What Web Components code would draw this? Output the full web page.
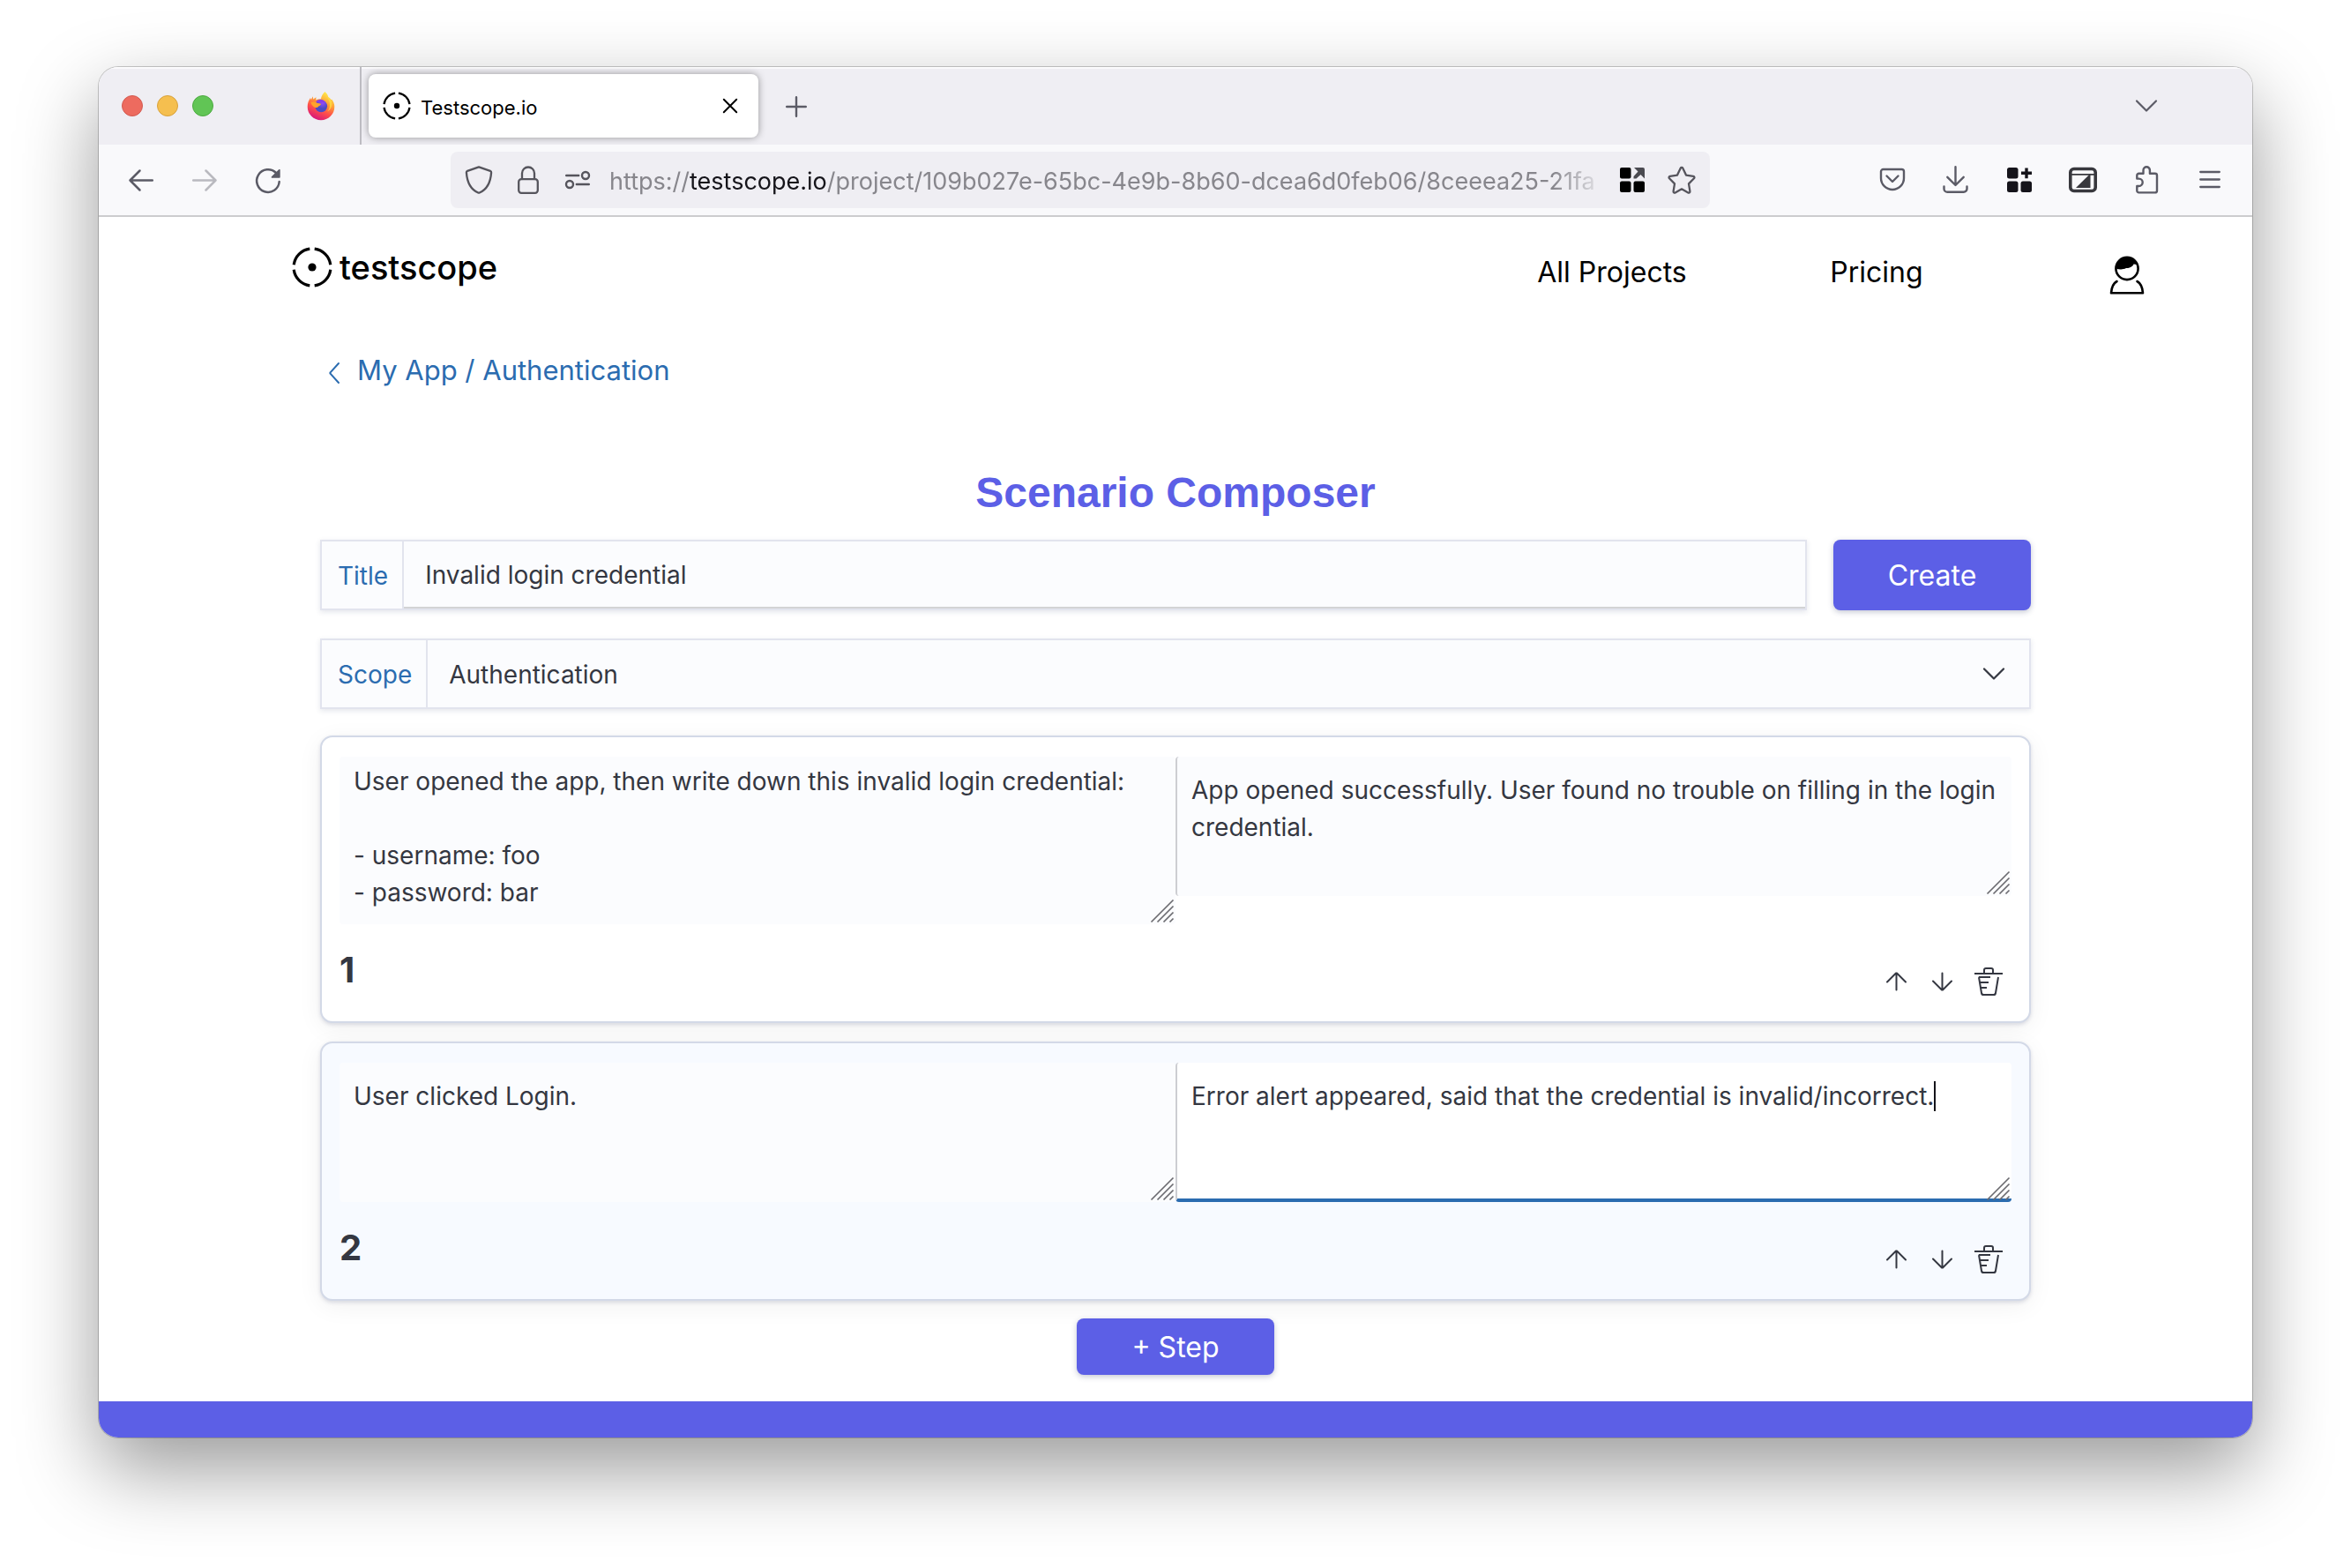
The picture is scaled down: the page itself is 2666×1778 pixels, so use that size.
<!DOCTYPE html>
<html lang="en">
<head>
<meta charset="utf-8">
<title>Testscope.io</title>
<style>
  body { margin: 0; padding: 76px 112px 148px; background: #fff; font-family: Inter, "Liberation Sans", sans-serif; font-size: 28px; line-height: 42px; color: #343741; }
</style>
</head>
<body>
<browser-window>
  <tab-strip slot="tabs" label="Testscope.io"></tab-strip>
  <nav-toolbar slot="toolbar"></nav-toolbar>
  <app-header></app-header>
  <scenario-composer>
    <step-card number="1">
      <step-text name="Action" tall>User opened the app, then write down this invalid login credential:

- username: foo
- password: bar</step-text>
      <step-text name="Expectation" divided>App opened successfully. User found no trouble on filling in the login credential.</step-text>
    </step-card>
    <step-card number="2" active>
      <step-text name="Action">User clicked Login.</step-text>
      <step-text name="Expectation" divided focused>Error alert appeared, said that the credential is invalid/incorrect.</step-text>
    </step-card>
  </scenario-composer>
</browser-window>

<script>
const reset = `
  :host, *, *::before, *::after { box-sizing: border-box; }
  button, input, select, textarea { font: inherit; color: inherit; margin: 0; padding: 0; border: 0; border-radius: 0; background: none; outline: 0; }
  button { cursor: pointer; display: flex; align-items: center; justify-content: center; }
  a { color: inherit; text-decoration: none; }
`;

function define(name, css, html, setup) {
  customElements.define(name, class extends HTMLElement {
    constructor() {
      super();
      this.attachShadow({ mode: 'open' });
    }
    connectedCallback() {
      if (this.shadowRoot.childNodes.length) return;
      const template = document.createElement('template');
      template.innerHTML = `<style>${reset}${css}</style>${typeof html === 'function' ? html(this) : html}`;
      this.shadowRoot.append(template.content.cloneNode(true));
      if (setup) setup(this);
    }
  });
}

/* Icon set: each entry is [viewBox width, viewBox height, markup] */
const line = 'fill="none" stroke="currentColor" stroke-linecap="round" stroke-linejoin="round"';
const icons = {
  target: [46, 46, `<g fill="none" stroke="currentColor" stroke-width="3.2"><path d="M20.3 2.2A21 21 0 0 0 2.2 20.3M25.7 2.2A21 21 0 0 1 43.8 20.3M43.8 25.7A21 21 0 0 1 25.7 43.8M20.3 43.8A21 21 0 0 1 2.2 25.7"/></g><circle cx="23" cy="23" r="4.6" fill="currentColor"/>`],
  close: [32, 32, `<path ${line} stroke-width="2" d="M8.8 8.8l14.4 14.4M23.2 8.8L8.8 23.2"/>`],
  plus: [32, 32, `<path ${line} stroke-width="2.4" d="M16 6.2v21.6M5.2 17h21.6"/>`],
  down: [32, 32, `<path ${line} stroke-width="2.2" d="M5 10.5l11 11 11-11"/>`],
  back: [32, 32, `<path ${line} stroke-width="2.5" d="M28.8 16.5H3.5M14.5 5.5L3.5 16.5l11 11"/>`],
  forward: [32, 32, `<path ${line} stroke-width="2.5" d="M3.2 16.5h25.3M17.5 5.5l11 11-11 11"/>`],
  reload: [32, 32, `<path ${line} stroke-width="2.5" d="M28.7 18A12.8 12.8 0 1 1 25 8"/><path fill="currentColor" d="M29.7 4.700v8.300a.8.8 0 0 1-.8.8H20.500a.9.9 0 0 1-.6-1.500L28.400 4.100a.8.8 0 0 1 1.300.6z"/>`],
  shield: [32, 32, `<path ${line} stroke-width="2.3" d="M16 1.3l13 4.6c.8.3 1.2.9 1.1 1.7C29.4 17.5 26 26.5 16.8 30.5c-.5.2-1.1.2-1.6 0C6 26.500 2.600 17.500 1.900 7.600c-.1-.8.3-1.400 1.100-1.700z"/>`],
  lock: [32, 32, `<g ${line} stroke-width="2.3"><rect x="5.2" y="15.2" width="21.6" height="15.6" rx="3"/><path d="M9 15V8.500a7 7 0 0 1 14 0V15"/></g>`],
  permissions: [32, 32, `<g ${line} stroke-width="2.4"><path d="M3.2 11h14M14.800 21h14"/><circle cx="25" cy="11" r="4"/><circle cx="7" cy="21" r="4"/></g>`],
  gridOpen: [32, 32, `<g fill="#000"><rect x="2" y="2" width="12.5" height="12.5" rx="2"/><rect x="2" y="17.5" width="12.5" height="12.5" rx="2"/><rect x="17.5" y="17.5" width="12.5" height="12.5" rx="2"/></g><path fill="#4a4a50" d="M18 2h10a2 2 0 0 1 2 2v10.500l-4.500-4.500-5 4.500H17.500v-2.500l5-5.500z"/>`],
  star: [32, 32, `<path ${line} stroke-width="2.3" d="M14.7 2.800c.5-1.100 2.100-1.100 2.600 0l3.700 7.800 8.200 1.200c1.200.2 1.700 1.600.8 2.500l-6 6.100 1.400 8.500c.2 1.200-1 2.100-2.100 1.500L16 26.300l-7.300 4.100c-1.100.6-2.300-.3-2.100-1.500L8 20.400l-6-6.100c-.9-.9-.4-2.300.8-2.500l8.200-1.200z"/>`],
  pocket: [32, 32, `<g ${line} stroke-width="2.4"><path d="M5.500 4h21A2.500 2.500 0 0 1 29 6.500V14a13 13 0 0 1-26 0V6.500A2.500 2.500 0 0 1 5.500 4z"/><path d="M9.500 11.500l6.500 6.500 6.500-6.500"/></g>`],
  download: [32, 32, `<g ${line} stroke-width="2.4"><path d="M15.500 1.200v20.300M6.300 12.800l9.200 9.200 9.200-9.200M2.500 23.500V26a3.800 3.800 0 0 0 3.800 3.800h18.400A3.800 3.800 0 0 0 28.500 26v-2.500"/></g>`],
  gridPlus: [32, 32, `<g fill="#15141a"><rect x="2" y="2" width="12.5" height="12.5" rx="2.5"/><rect x="2" y="17.5" width="12.5" height="12.5" rx="2.5"/><rect x="17.5" y="17.5" width="12.5" height="12.5" rx="2.5"/><path d="M22.300 2.500h3.400v4h4.300v3.500h-4.300v4.200h-3.400v-4.200H18V6.500h4.300z"/></g>`],
  reader: [32, 32, `<g stroke="#38383d" fill="none"><rect x="1.8" y="3.500" width="28.400" height="25" rx="4" stroke-width="3.600"/><path d="M3 9.800h26" stroke-width="1.800"/></g><path fill="#38383d" d="M8 25h16.500V8.800z"/>`],
  puzzle: [32, 32, `<path ${line} stroke-width="2.4" d="M12.500 8.800V4.900a3.700 3.700 0 0 1 7.400 0v3.900h5.900A2.200 2.200 0 0 1 28 11v17.200a2.200 2.200 0 0 1-2.200 2.200H7.500a2.200 2.200 0 0 1-2.200-2.200V23h2.200a4.200 4.200 0 0 0 0-8.400H5.300V11a2.200 2.200 0 0 1 2.200-2.200z"/>`],
  menu: [32, 32, `<path ${line} stroke-width="2.3" d="M5.200 7h21.600M5.200 15.500h21.600M5.200 24h21.600"/>`],
  user: [40, 44, `<g ${line} stroke="#000" stroke-width="2.6"><path d="M8.500 29C5 31 2.500 35.500 2 42.300h36C37.500 35.500 35 31 31.500 29"/><circle cx="20" cy="14.500" r="12.600"/></g><path fill="#000" d="M7.400 14.500A12.600 12.600 0 0 1 31.500 9.500c-1.500.4-2.700.3-3.700-.3-1.300 3.200-5 5-8.800 4.800-4 2-8 1.500-11.600.5z"/>`],
  left: [12, 24, `<path ${line} stroke-width="2" d="M11 1L1.600 11.300a1 1 0 0 0 0 1.400L11 23"/>`],
  up: [32, 32, `<path ${line} stroke-width="2" d="M15.500 25.500V6.500M5 16.500l10-10h1l10 10"/>`],
  descend: [32, 32, `<path ${line} stroke-width="2" d="M15.500 6.500v19M5 15.500l10 10h1l10-10"/>`],
  trash: [32, 32, `<g fill="none" stroke="currentColor" stroke-width="2"><path d="M0 7h32M11 7V3a2 2 0 0 1 2-2h6a2 2 0 0 1 2 2v4M5 11l3 18a2.300 2.300 0 0 0 2.300 2h11.400a2.300 2.300 0 0 0 2.300-2l3-18M4.800 11H18M6.500 17H16M7.500 23H14"/></g>`],
  grip: [26, 26, `<path fill="none" stroke="#6b6b70" stroke-width="1.7" d="M.5 25.500l25-25M7.500 25.500l18-18M14.500 25.500l11-11M21.500 25.500l4-4"/>`],
  firefox: [32, 32, `<defs><linearGradient id="f" x1=".75" y1="0" x2=".3" y2="1"><stop offset="0" stop-color="#fff44f"/><stop offset=".35" stop-color="#ffa436"/><stop offset=".65" stop-color="#ff4f4a"/><stop offset="1" stop-color="#d4117f"/></linearGradient><radialGradient id="p" cx=".6" cy=".2"><stop offset="0" stop-color="#9d4bff"/><stop offset="1" stop-color="#4a4bc4"/></radialGradient></defs><path fill="url(#f)" d="M20.500 0c2 1.800 3.300 3.800 3.900 6.200 1.400.7 2.400 1.800 2.900 2.800l1-.3C30.400 11.200 31.300 14 31.300 17A15.300 15.300 0 0 1 .7 17c0-4 1.300-7.300 3.300-10l.8 2L6.800 5.200l.4 3.200 3.300-2.200-.2 3.200c2-1 4.200-1.200 5.600-.9.400-3.500 2.200-6.500 4.600-8.500z"/><circle cx="16.200" cy="16.300" r="6.900" fill="url(#p)"/><path fill="#8a3fe8" d="M10 11.500c2.500-3.500 8-4 11 .3l-4 .7z"/><path fill="#ffa32b" d="M4.500 12c3-1.200 5.500-.4 7 .8 1.500.6 3.600.2 4.600 1.200-.5 1.800-3 2.200-3.700 3.400-1.600 1.200-4.500.6-5.200-.9-1.200-1-2.200-2.300-2.700-4.500z"/><path fill="#ffdf43" opacity=".75" d="M21 1.500c.7 4.500 4.500 6.500 5 12.500.3 4-1 6.500-3 8.500 6-2.500 7-10.500 3-14.500-2-2-4-3.500-5-6.500z"/>`]
};

define('ui-icon', `
  :host { display: block; flex: none; }
  svg { display: block; width: 100%; height: 100%; overflow: visible; }
`, el => {
  const [w, h, body] = icons[el.getAttribute('name')];
  el.style.width = (el.getAttribute('size') || w) + 'px';
  el.style.height = (el.getAttribute('size') || h) + 'px';
  return `<svg viewBox="0 0 ${w} ${h}" aria-hidden="true">${body}</svg>`;
});

define('browser-window', `
  :host { display: flex; flex-direction: column; overflow: hidden; border-radius: 22px; background: #fff; box-shadow: 0 0 0 1px rgba(0,0,0,.2), 0 36px 90px rgba(0,0,0,.4); }
  footer { height: 41px; background: #5c5fe6; }
`, `<slot name="tabs"></slot><slot name="toolbar"></slot><slot></slot><footer></footer>`);

define('tab-strip', `
  :host { display: flex; align-items: center; height: 88px; padding: 0 104px 0 26px; background: #efeef3; color: #5b5b66; font-size: 22px; box-shadow: inset 0 2px 1px rgba(255,255,255,.8); }
  .lights { display: flex; gap: 16px; margin-right: 106px; }
  .lights button { width: 24px; height: 24px; border-radius: 50%; background: #ed6b5f; border: 1px solid #d35a50; }
  .lights button:nth-child(2) { background: #f5bf4f; border-color: #d8a13c; }
  .lights button:nth-child(3) { background: #61c555; border-color: #4caa40; }
  .rule { align-self: stretch; width: 2px; margin: 0 8px 0 28px; background: #bdbcc2; }
  .tab { display: flex; align-items: center; width: 442px; height: 72px; padding: 0 16px; border-radius: 8px; background: #fff; color: #000; box-shadow: 0 0 8px rgba(0,0,0,.38); }
  .tab span { flex: 1; margin-left: 11px; padding-top: 3px; }
  .new { margin-left: 27px; }
  .list { margin-left: auto; }
`, el => `
  <div class="lights"><button aria-label="Close window"></button><button aria-label="Minimize window"></button><button aria-label="Zoom window"></button></div>
  <ui-icon name="firefox"></ui-icon><div class="rule"></div>
  <div class="tab"><ui-icon name="target" size="32"></ui-icon><span>${el.getAttribute('label')}</span><button aria-label="Close tab"><ui-icon name="close"></ui-icon></button></div>
  <button class="new" aria-label="New tab"><ui-icon name="plus"></ui-icon></button>
  <button class="list" aria-label="List all tabs"><ui-icon name="down"></ui-icon></button>`);

define('nav-toolbar', `
  :host { display: flex; align-items: center; height: 82px; padding: 0 32px; background: #f9f9fb; border-bottom: 2px solid #ccccce; color: #5b5b66; }
  .group { display: flex; gap: 40px; }
  .address { flex: 1; min-width: 0; display: flex; align-items: center; height: 64px; margin: 0 191px; padding: 0 16px; border-radius: 8px; background: #efeef3; color: #55545c; }
  .address .group { gap: 24px; }
  .url { flex: 1; min-width: 0; margin: 0 14px 0 20px; padding-top: 3px; overflow: hidden; white-space: nowrap; font-size: 27px; color: #87868c; -webkit-mask-image: linear-gradient(to left, transparent, #000 60px); mask-image: linear-gradient(to left, transparent, #000 60px); }
  .url b { font-weight: 400; color: #15141a; }
  button[disabled] { opacity: .4; }
`, `
  <div class="group">
    <button aria-label="Back"><ui-icon name="back"></ui-icon></button>
    <button aria-label="Forward" disabled><ui-icon name="forward"></ui-icon></button>
    <button aria-label="Reload"><ui-icon name="reload"></ui-icon></button>
  </div>
  <div class="address">
    <div class="group">
      <button aria-label="Tracking protection"><ui-icon name="shield"></ui-icon></button>
      <button aria-label="Site security"><ui-icon name="lock"></ui-icon></button>
      <button aria-label="Permissions"><ui-icon name="permissions"></ui-icon></button>
    </div>
    <div class="url" role="textbox" aria-label="Address">https://<b>testscope.io</b>/project/109b027e-65bc-4e9b-8b60-dcea6d0feb06/8ceeea25-21fa</div>
    <div class="group">
      <button aria-label="Open in grid"><ui-icon name="gridOpen"></ui-icon></button>
      <button aria-label="Bookmark"><ui-icon name="star"></ui-icon></button>
    </div>
  </div>
  <div class="group">
    <button aria-label="Pocket"><ui-icon name="pocket"></ui-icon></button>
    <button aria-label="Downloads"><ui-icon name="download"></ui-icon></button>
    <button aria-label="Add to grid"><ui-icon name="gridPlus"></ui-icon></button>
    <button aria-label="Reader"><ui-icon name="reader"></ui-icon></button>
    <button aria-label="Extensions"><ui-icon name="puzzle"></ui-icon></button>
    <button aria-label="Menu"><ui-icon name="menu"></ui-icon></button>
  </div>`);

define('app-header', `
  :host { display: flex; justify-content: space-between; align-items: flex-start; height: 150px; padding: 34px 8px 0 219px; color: #000; font-size: 32px; line-height: 58px; }
  .logo { display: flex; align-items: center; gap: 8px; height: 46px; font-size: 38px; line-height: 46px; font-weight: 500; }
  nav { display: grid; grid-template-columns: 300px 300px 268px; justify-items: center; }
  nav a:last-child { padding-top: 10px; }
`, `
  <a class="logo" href="#"><ui-icon name="target"></ui-icon><span>testscope</span></a>
  <nav><a href="#">All Projects</a><a href="#">Pricing</a><a href="#" aria-label="Account"><ui-icon name="user"></ui-icon></a></nav>`);

define('scenario-composer', `
  :host { display: flex; flex-direction: column; padding: 0 251px 30px; }
  .crumbs { display: flex; align-items: center; gap: 20px; align-self: flex-start; margin-bottom: 78px; padding-left: 10px; color: #2b6cb0; font-size: 31px; line-height: 50px; height: 48px; }
  .crumbs ui-icon { margin-top: 6px; }
  h1 { margin: 0 0 16px; text-align: center; color: #5c5fe6; font: bold 48px/74px "Liberation Sans", Arial, sans-serif; }
  .row { display: flex; gap: 30px; margin-bottom: 32px; }
  .row + .row { margin-bottom: 30px; }
  .field { flex: 1; display: flex; height: 80px; border: 2px solid #e2e4ee; background: #fbfcfe; box-shadow: 0 2px 6px rgba(60,70,110,.14); }
  label { padding: 0 16px 0 18px; border-right: 2px solid #e2e4ee; color: #2b6cb0; line-height: 78px; }
  input, .pick { flex: 1; min-width: 0; }
  input { padding: 2px 24px 0; border-bottom: 2px solid #d2d3d5; }
  .pick { display: grid; align-items: stretch; }
  .pick > * { grid-area: 1 / 1; }
  select { appearance: none; -webkit-appearance: none; padding: 2px 24px 0; }
  .pick ui-icon { justify-self: end; align-self: center; margin-right: 24px; pointer-events: none; }
  .primary { width: 224px; height: 80px; padding-top: 2px; border-radius: 8px; background: #5c5fe6; color: #fff; font-size: 32px; box-shadow: 0 2px 6px rgba(60,70,110,.3); }
  .steps { display: flex; flex-direction: column; gap: 21px; margin-bottom: 20px; }
  .add { align-self: center; height: 64px; }
`, `
  <a class="crumbs" href="#"><ui-icon name="left"></ui-icon><span>My App / Authentication</span></a>
  <h1>Scenario Composer</h1>
  <div class="row">
    <div class="field"><label for="title">Title</label><input id="title" value="Invalid login credential"></div>
    <button class="primary">Create</button>
  </div>
  <div class="row">
    <div class="field"><label for="scope">Scope</label><div class="pick"><select id="scope"><option>Authentication</option></select><ui-icon name="down"></ui-icon></div></div>
  </div>
  <div class="steps"><slot></slot></div>
  <button class="primary add">+ Step</button>`);

define('step-card', `
  :host { display: block; padding: 22px 20px 28px; border: 2px solid #d3d9e7; border-radius: 14px; background: #fff; box-shadow: 0 2px 4px rgba(60,70,110,.16), 0 6px 28px rgba(0,0,0,.06); }
  :host([active]) { background: #f7faff; }
  .texts { display: grid; grid-template-columns: 1fr 1fr; align-items: start; }
  .foot { display: flex; justify-content: space-between; align-items: flex-end; margin-top: 22px; }
  strong { font-size: 40px; line-height: 60px; font-weight: 700; }
  .actions { display: flex; }
  .actions button { width: 52px; height: 34px; }
`, el => `
  <div class="texts"><slot></slot></div>
  <div class="foot"><strong>${el.getAttribute('number')}</strong>
    <div class="actions">
      <button aria-label="Move up"><ui-icon name="up"></ui-icon></button>
      <button aria-label="Move down"><ui-icon name="descend"></ui-icon></button>
      <button aria-label="Delete step"><ui-icon name="trash"></ui-icon></button>
    </div>
  </div>`);

define('step-text', `
  :host { display: block; position: relative; }
  textarea { display: block; width: 100%; height: 158px; padding: 17px 16px 0; border-radius: 4px; resize: none; overflow: hidden; background: #fbfcfe; }
  :host([tall]) textarea { height: 190px; padding-top: 7px; }
  :host([divided]) textarea { border-left: 2px solid #cdced2; }
  :host([focused]) textarea { background: #fff; border-bottom: 4px solid #2b6cb0; }
  ui-icon { position: absolute; right: 2px; bottom: 2px; }
  .caret { position: absolute; left: 860px; top: 21px; width: 2px; height: 34px; background: #15141a; }
`, el => `
  <textarea aria-label="${el.getAttribute('name')}"></textarea><ui-icon name="grip"></ui-icon>
  ${el.hasAttribute('focused') ? '<i class="caret"></i>' : ''}`,
el => { el.shadowRoot.querySelector('textarea').textContent = el.textContent; });
</script>
</body>
</html>
